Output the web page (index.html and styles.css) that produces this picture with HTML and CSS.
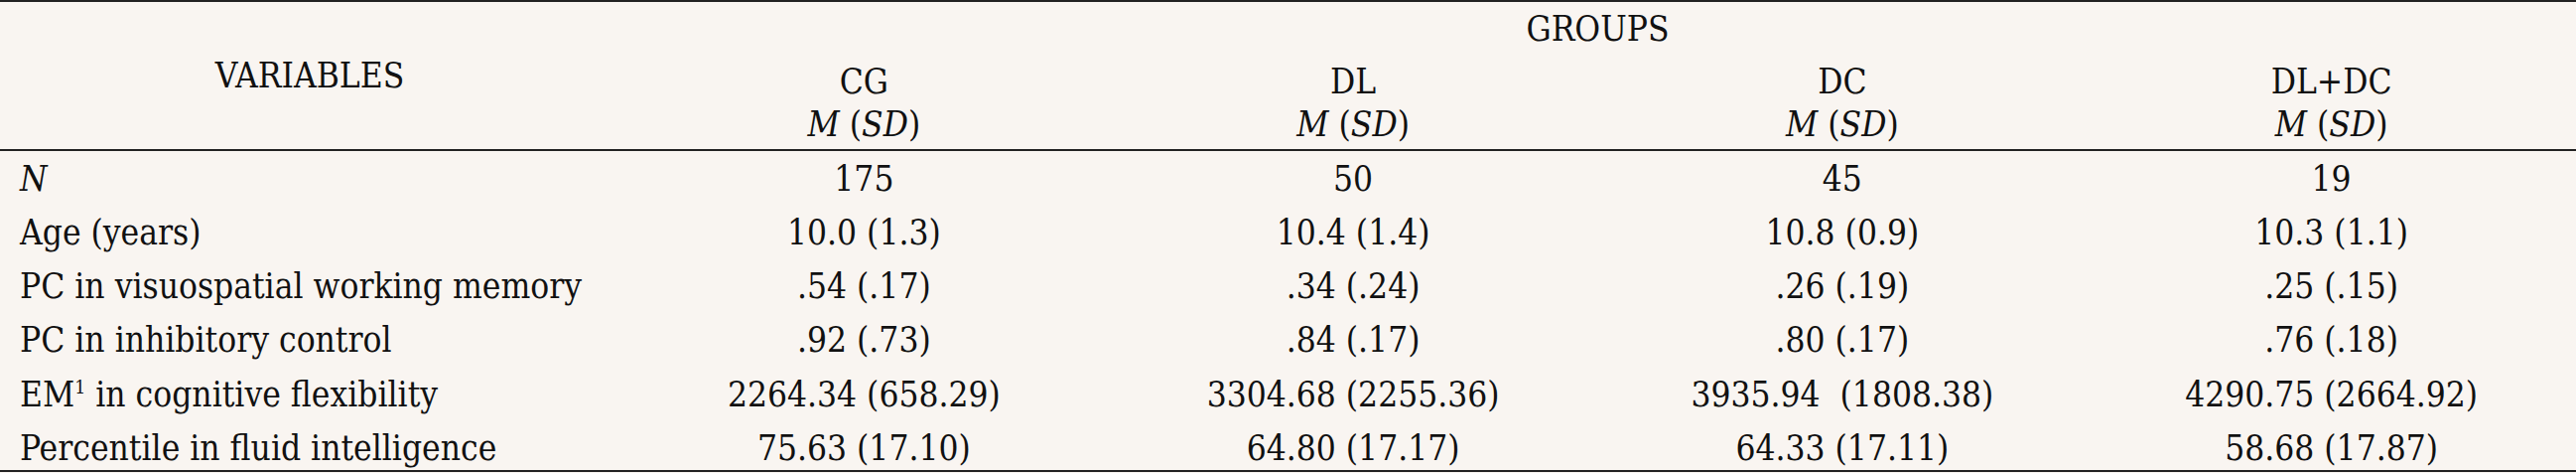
FILE: index.html
```html
<!DOCTYPE html>
<html lang="en">
<head>
    <meta charset="UTF-8">
    <title>Groups table</title>
    <link rel="stylesheet" href="styles.css">
</head>
<body>

    <table class="stats">
        <thead>
            <tr>
                <th class="var-head" rowspan="2">VARIABLES</th>
                <th class="groups-head" colspan="4">GROUPS</th>
            </tr>
            <tr class="group-names">
                <th>CG<br><i>M</i> (<i>SD</i>)</th>
                <th>DL<br><i>M</i> (<i>SD</i>)</th>
                <th>DC<br><i>M</i> (<i>SD</i>)</th>
                <th>DL+DC<br><i>M</i> (<i>SD</i>)</th>
            </tr>
        </thead>
        <tbody>
            <tr>
                <td><i>N</i></td>
                <td>175</td>
                <td>50</td>
                <td>45</td>
                <td>19</td>
            </tr>
            <tr>
                <td>Age (years)</td>
                <td>10.0 (1.3)</td>
                <td>10.4 (1.4)</td>
                <td>10.8 (0.9)</td>
                <td>10.3 (1.1)</td>
            </tr>
            <tr>
                <td>PC in visuospatial working memory</td>
                <td>.54 (.17)</td>
                <td>.34 (.24)</td>
                <td>.26 (.19)</td>
                <td>.25 (.15)</td>
            </tr>
            <tr>
                <td>PC in inhibitory control</td>
                <td>.92 (.73)</td>
                <td>.84 (.17)</td>
                <td>.80 (.17)</td>
                <td>.76 (.18)</td>
            </tr>
            <tr>
                <td>EM<sup>1</sup> in cognitive flexibility</td>
                <td>2264.34 (658.29)</td>
                <td>3304.68 (2255.36)</td>
                <td>3935.94 &nbsp;(1808.38)</td>
                <td>4290.75 (2664.92)</td>
            </tr>
            <tr>
                <td>Percentile in fluid intelligence</td>
                <td>75.63 (17.10)</td>
                <td>64.80 (17.17)</td>
                <td>64.33 (17.11)</td>
                <td>58.68 (17.87)</td>
            </tr>
        </tbody>
    </table>

</body>
</html>
```

FILE: styles.css
```css
body {
    margin: 0;
    background: #f9f5f1;
    font-family: 'DejaVu Serif Condensed', 'Liberation Serif', serif;
    font-size: 35px;
    line-height: 43px;
    color: #111;
}

.stats {
    width: 2595px;
    border-collapse: collapse;
    table-layout: fixed;
    border-top: 2px solid #222;
    border-bottom: 2px solid #222;
}

.stats th {
    font-weight: normal;
    text-align: center;
    padding: 0;
}

.stats th.var-head {
    width: 624px;
    vertical-align: middle;
}

.stats th.groups-head {
    padding: 6px 0 10px;
}

.group-names th {
    padding: 0 0 3px;
}

thead {
    border-bottom: 2px solid #222;
}

.stats td {
    text-align: center;
    padding: 5px 0 6px;
    white-space: nowrap;
}

.stats tbody tr:first-child td {
    padding-top: 7px;
}

.stats tbody tr:nth-child(4) td {
    padding-bottom: 7px;
}

.stats tbody tr:last-child td {
    padding-bottom: 0;
}

.stats td:first-child {
    text-align: left;
    padding-left: 20px;
}

sup {
    font-size: 0.55em;
    line-height: 0;
    vertical-align: 0.7em;
}
```
